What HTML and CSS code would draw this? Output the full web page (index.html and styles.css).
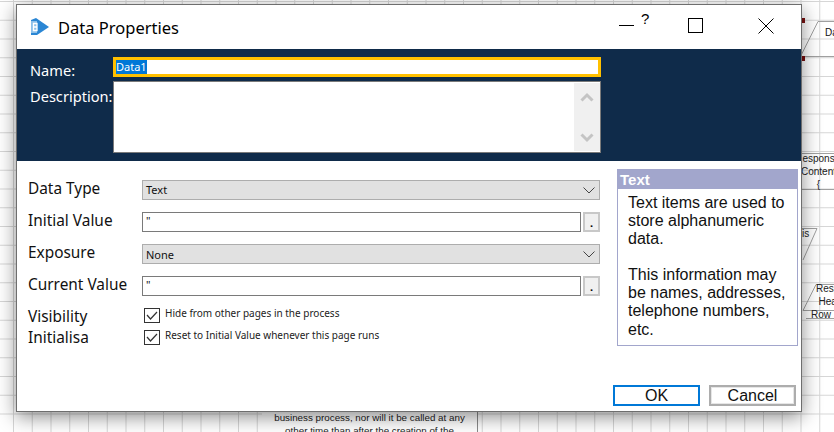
FILE: index.html
```html
<!DOCTYPE html>
<html lang="en">
<head>
    <meta charset="UTF-8">
    <title>Data Properties</title>
    <link rel="stylesheet" href="styles.css">
</head>
<body>
    <div class="canvas">
        <!-- process diagram behind the dialog -->
        <svg class="shapes" width="834" height="432" viewBox="0 0 834 432">
            <path d="M801 55.5L818 21.5H834M801 56.5H834" class="shape-line"/>
            <rect x="801" y="18" width="4" height="5" fill="#7a1010"/>
            <rect x="801" y="56" width="4" height="5" fill="#7a1010"/>
            <path d="M801 153.5H834M801 189.5H834" class="shape-line"/>
            <path d="M801 228.5H817L803 260" class="shape-line"/>
            <path d="M816 284.5H834M816 284.5L803 310.5H834" class="shape-line"/>
            <path d="M806 318.5H834" class="shape-line"/>
        </svg>
        <div class="node node-da">Da</div>
        <div class="node node-response">espons<br>Content<br>{</div>
        <div class="node node-is">is</div>
        <div class="node node-resp">Resp<br>Hea</div>
        <div class="node node-row">Row</div>
        <div class="node node-note">business process, nor will it be called at any<br>other time than after the creation of the</div>

        <div class="dialog">
            <div class="titlebar">
                <svg class="app-icon" width="20" height="20" viewBox="0 0 20 20">
                    <path d="M6 1L19 10L7 18H1V3Z" fill="#2a86d4"/>
                    <path d="M1 4H7V16H1Z" fill="#8cc0ea"/>
                    <path d="M3.500 6.500H7V13.500H3.500ZM3.500 10H7" fill="none" stroke="#fff" stroke-width="1.300"/>
                </svg>
                <span class="title">Data Properties</span>
                <div class="win-buttons">
                    <span class="win-min"></span>
                    <span class="win-help">?</span>
                    <span class="win-max"></span>
                    <svg class="win-close" width="16" height="16" viewBox="0 0 16 16">
                        <path d="M0.500 0.500L15.500 15.500M15.500 0.500L0.500 15.500" stroke="#000" fill="none"/>
                    </svg>
                </div>
            </div>

            <div class="header">
                <label class="header-label">Name:</label>
                <div class="name-input"><span class="selected">Data1</span></div>
                <label class="header-label header-label-desc">Description:</label>
                <div class="desc-input">
                    <div class="scrollbar">
                        <svg width="14" height="10" viewBox="0 0 14 10"><path d="M1.500 8.500L7 3L12.500 8.500" fill="none" stroke="#c4c4c4" stroke-width="3"/></svg>
                        <svg width="14" height="10" viewBox="0 0 14 10"><path d="M1.500 1.500L7 7L12.500 1.500" fill="none" stroke="#c4c4c4" stroke-width="3"/></svg>
                    </div>
                </div>
            </div>

            <div class="body">
                <div class="form">
                    <label class="form-label">Data Type</label>
                    <div class="select">Text
                        <svg width="12" height="7" viewBox="0 0 12 7"><path d="M0.500 0.500L6 6L11.500 0.500" fill="none" stroke="#444"/></svg>
                    </div>
                    <label class="form-label">Initial Value</label>
                    <div class="field-row">
                        <div class="text-input">"</div>
                        <div class="dots-btn">.</div>
                    </div>
                    <label class="form-label">Exposure</label>
                    <div class="select select-low">None
                        <svg width="12" height="7" viewBox="0 0 12 7"><path d="M0.500 0.500L6 6L11.500 0.500" fill="none" stroke="#444"/></svg>
                    </div>
                    <label class="form-label">Current Value</label>
                    <div class="field-row">
                        <div class="text-input">"</div>
                        <div class="dots-btn">.</div>
                    </div>
                    <div class="checks">
                        <div class="check-labels">
                            <label class="form-label">Visibility</label>
                            <label class="form-label">Initialisa</label>
                        </div>
                        <div class="check-list">
                            <div class="check-row">
                                <svg class="checkbox" width="16" height="15" viewBox="0 0 16 15"><rect x="0.500" y="0.500" width="15" height="14" fill="#fff" stroke="#333"/><path d="M3 7L6.500 11L13 4" fill="none" stroke="#333" stroke-width="1.200"/></svg>
                                Hide from other pages in the process
                            </div>
                            <div class="check-row">
                                <svg class="checkbox" width="16" height="15" viewBox="0 0 16 15"><rect x="0.500" y="0.500" width="15" height="14" fill="#fff" stroke="#333"/><path d="M3 7L6.500 11L13 4" fill="none" stroke="#333" stroke-width="1.200"/></svg>
                                Reset to Initial Value whenever this page runs
                            </div>
                        </div>
                    </div>
                </div>

                <div class="help-panel">
                    <div class="help-title">Text</div>
                    <div class="help-text">
                        <p>Text items are used to store alphanumeric data.</p>
                        <p>This information may be names, addresses, telephone numbers, etc.</p>
                    </div>
                </div>
            </div>

            <div class="footer">
                <button class="btn btn-ok">OK</button>
                <button class="btn btn-cancel">Cancel</button>
            </div>
        </div>
    </div>
</body>
</html>
```

FILE: styles.css
```css
* {
    margin: 0;
    padding: 0;
    box-sizing: border-box;
}

body {
    width: 834px;
    height: 432px;
    overflow: hidden;
    background: #fff;
    font-family: "Noto Sans", sans-serif;
}

.canvas {
    position: relative;
    width: 834px;
    height: 432px;
    overflow: hidden;
    background-color: #fff;
    background-image:
        linear-gradient(to right, #d6d6d6 1px, transparent 1px),
        linear-gradient(to bottom, #d6d6d6 1px, transparent 1px);
    background-size: 18.75px 18.75px;
    background-position: 13px 1px;
}

.shapes {
    position: absolute;
    left: 0;
    top: 0;
}

.shape-line {
    fill: none;
    stroke: #a0a0a0;
}

.node {
    position: absolute;
    font-family: "Liberation Sans", sans-serif;
    font-size: 10px;
    line-height: 12px;
    color: #222;
    text-align: center;
    white-space: nowrap;
}

.node-da { left: 825px; top: 27px; color: #111; }
.node-response { left: 801px; top: 152px; line-height: 13px; }
.node-is { left: 802px; top: 228px; }
.node-resp { left: 816px; top: 282px; line-height: 13px; }
.node-row { left: 811px; top: 309px; }

.node-note {
    left: 262px;
    top: 411px;
    width: 216px;
    height: 21px;
    background: #fff;
    border-right: 1px solid #8a8a8a;
    font-size: 9.800px;
    line-height: 13px;
}

.dialog {
    position: absolute;
    left: 16px;
    top: 4px;
    width: 786px;
    height: 408px;
    background: #fff;
    border: 1px solid #6e6e6e;
    box-shadow: 0 5px 18px rgba(0, 0, 0, 0.45);
    display: flex;
    flex-direction: column;
}

.titlebar {
    height: 44px;
    flex: none;
    display: flex;
    align-items: center;
    padding-left: 13px;
    color: #000;
}

.app-icon {
    margin-right: 8px;
}

.title {
    font-size: 16.500px;
}

.win-buttons {
    position: relative;
    margin-left: auto;
    width: 200px;
    height: 44px;
}

.win-min {
    position: absolute;
    left: 18px;
    top: 20px;
    width: 15px;
    height: 1px;
    background: #000;
}

.win-help {
    position: absolute;
    left: 40px;
    top: 5px;
    font-family: "Liberation Sans", sans-serif;
    font-size: 15px;
    line-height: 18px;
}

.win-max {
    position: absolute;
    left: 87px;
    top: 13px;
    width: 15px;
    height: 15px;
    border: 1px solid #000;
}

.win-close {
    position: absolute;
    left: 157px;
    top: 13px;
}

.header {
    height: 112px;
    flex: none;
    background: #0f2b4a;
    padding: 8px 0 0 13px;
    display: grid;
    grid-template-columns: 83px 488px;
    grid-template-rows: 20px 72px;
    row-gap: 4px;
}

.header-label {
    color: #fff;
    font-size: 14.600px;
    line-height: 20px;
    white-space: nowrap;
    padding-top: 3px;
}

.header-label-desc {
    padding-top: 5px;
}

.name-input {
    background: #fff;
    border: 3px solid #ffc000;
    font-size: 11px;
    line-height: 14px;
    color: #000;
}

.selected {
    display: inline-block;
    background: #0078d7;
    color: #fff;
}

.desc-input {
    background: #fff;
    border: 1px solid #7a7a7a;
    display: flex;
    justify-content: flex-end;
}

.scrollbar {
    width: 26px;
    margin: 1px 0;
    background: #f0f0f0;
    display: flex;
    flex-direction: column;
    align-items: center;
    justify-content: space-between;
    padding: 9px 0 8px;
}

.body {
    flex: 1;
    display: flex;
    align-items: flex-start;
}

.form {
    width: 584px;
    padding: 19px 0 0 11px;
    display: grid;
    grid-template-columns: 114px 458px;
    grid-auto-rows: 20px;
    row-gap: 12px;
}

.form-label {
    font-size: 15.400px;
    line-height: 15px;
    padding-top: 1px;
    color: #111;
    white-space: nowrap;
}

.select {
    background: #e1e1e1;
    border: 1px solid #adadad;
    font-size: 11px;
    line-height: 18px;
    padding: 0 4px 0 3px;
    color: #111;
    display: flex;
    align-items: center;
    justify-content: space-between;
}

.select-low {
    padding-top: 1px;
}

.field-row {
    display: flex;
    gap: 2px;
}

.text-input {
    flex: 1;
    background: #fff;
    border: 1px solid #7a7a7a;
    font-size: 11px;
    line-height: 16px;
    padding-left: 3px;
    color: #111;
}

.dots-btn {
    width: 17px;
    background: #f0f0f0;
    border: 2px solid #c8c8c8;
    font-size: 11px;
    font-weight: bold;
    line-height: 17px;
    text-align: center;
    color: #000;
}

.checks {
    grid-column: 1 / 3;
    display: grid;
    grid-template-columns: 114px 1fr;
}

.check-labels {
    display: flex;
    flex-direction: column;
    gap: 5px;
}

.check-list {
    display: flex;
    flex-direction: column;
    gap: 2px;
    margin-top: -5px;
    padding-left: 2px;
}

.check-row {
    display: flex;
    align-items: flex-start;
    gap: 5px;
    height: 20px;
    font-size: 10px;
    line-height: 20px;
    color: #222;
    white-space: nowrap;
}

.checkbox {
    margin-top: 5px;
}

.help-panel {
    margin: 8px 0 0 16px;
    width: 181px;
    height: 177px;
    border: 1px solid #a2a6cc;
    font-family: "Liberation Sans", sans-serif;
}

.help-title {
    background: #a2a6cc;
    color: #fff;
    font-size: 15px;
    font-weight: bold;
    line-height: 19px;
    padding-left: 2px;
}

.help-text {
    padding: 5px 8px 0 10px;
    font-size: 16px;
    line-height: 18.100px;
    color: #111;
}

.help-text p {
    margin-bottom: 18px;
}

.footer {
    position: absolute;
    right: 5px;
    bottom: 5px;
    display: flex;
    gap: 9px;
}

.btn {
    width: 87px;
    height: 21px;
    border: 2px solid #adadad;
    background: #fff;
    font-family: "Liberation Sans", sans-serif;
    font-size: 16px;
    line-height: 17px;
    color: #111;
}

.btn-ok {
    border-color: #0078d7;
}

.btn-cancel {
    box-shadow: inset 0 0 0 1px #e6e6e6;
}
```
